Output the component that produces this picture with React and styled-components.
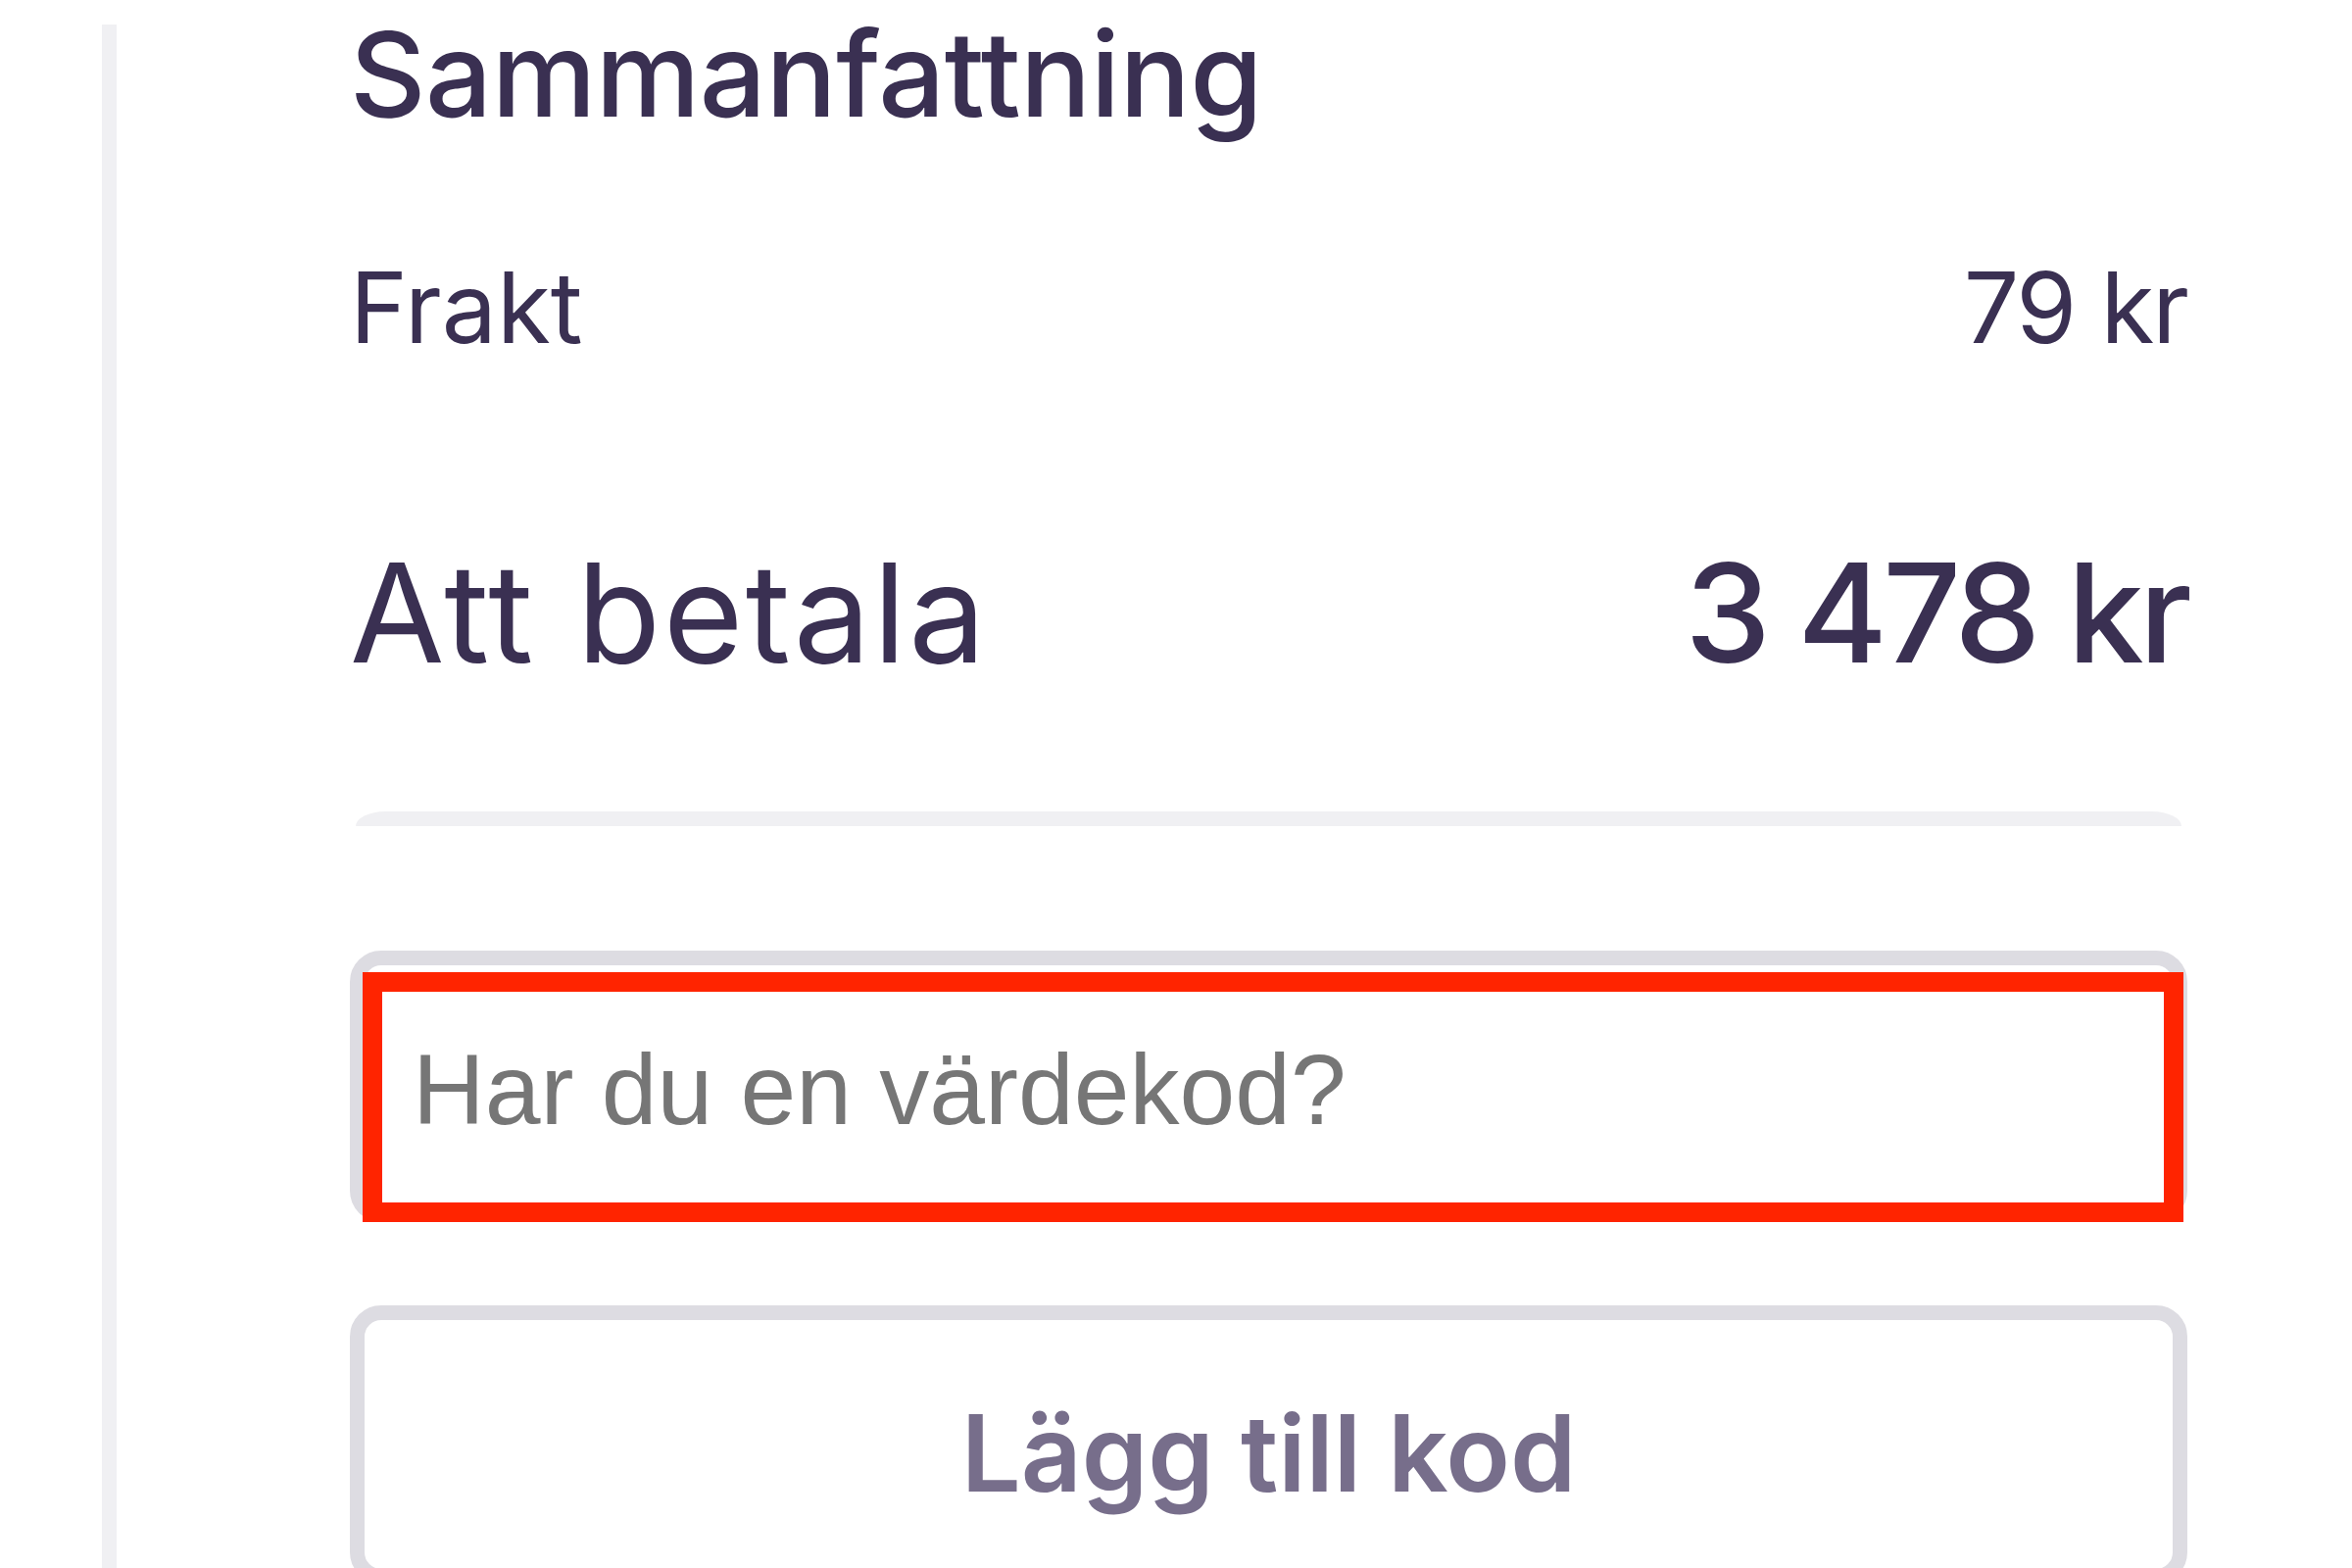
import React from "react";
import styled, { createGlobalStyle } from "styled-components";

const Global = createGlobalStyle`
  html, body { margin: 0; padding: 0; background: #ffffff; }
  * { box-sizing: border-box; }
  body { font-family: Inter, "Noto Sans", sans-serif; color: #3a3052; }
`;

const Page = styled.div`
  display: flex;
  align-items: stretch;
  min-height: 1600px;
  padding-left: 104px;
`;

const SideLine = styled.div`
  width: 15px;
  margin-top: 25px;
  background: #f0f0f3;
  flex: none;
`;

const Summary = styled.section`
  display: flex;
  flex-direction: column;
  width: 1875px;
  margin-left: 238px;
  padding-top: 16px;
  & > * {
    flex-shrink: 0;
  }
`;

const Title = styled.h2`
  margin: 0;
  font-size: 120px;
  line-height: 120px;
  font-weight: 500;
  color: #3a3052;
  letter-spacing: -0.5px;
`;

const Row = styled.div`
  display: flex;
  justify-content: space-between;
  align-items: baseline;
  margin-top: ${(p) => p.$gap}px;
  font-size: ${(p) => p.$size}px;
  line-height: ${(p) => p.$size}px;
  color: #3a3052;
`;

const Label = styled.span`
  font-weight: ${(p) => p.$weight || 400};
  letter-spacing: ${(p) => p.$spacing || 0}px;
`;

const Amount = styled.span`
  font-weight: ${(p) => p.$weight || 400};
  letter-spacing: ${(p) => p.$spacing || 0}px;
`;

const Divider = styled.div`
  height: 15px;
  margin: 133px 6px 0 6px;
  background: #f0f0f3;
  border-radius: 30px 30px 0 0 / 15px 15px 0 0;
`;

const CodeField = styled.div`
  margin-top: 127px;
  height: 277px;
  border: 15px solid #dddce2;
  border-radius: 32px;
`;

const CodeInput = styled.input`
  display: block;
  width: calc(100% - 27px);
  height: 215px;
  margin: 27px 0 0 18px;
  padding: 0 0 14px 31px;
  border: none;
  background: transparent;
  outline: 20px solid #ff2400;
  font-family: "Liberation Sans", Arial, sans-serif;
  font-size: 102px;
  color: #3a3052;
  &::placeholder {
    color: #767676;
    opacity: 1;
  }
`;

const AddButton = styled.button`
  display: flex;
  justify-content: center;
  align-items: flex-start;
  margin-top: 85px;
  width: 100%;
  height: 284px;
  padding: 82px 0 0 0;
  border: 15px solid #dddce2;
  border-radius: 32px;
  background: #ffffff;
  font-family: Inter, "Noto Sans", sans-serif;
  font-size: 108px;
  line-height: 108px;
  font-weight: 600;
  color: #776e8b;
  cursor: pointer;
`;

export default function App() {
  return (
    <>
      <Global />
      <Page>
        <SideLine />
        <Summary>
          <Title>Sammanfattning</Title>
          <Row $gap={128} $size={100}>
            <Label>Frakt</Label>
            <Amount $spacing={-2}>79 kr</Amount>
          </Row>
          <Row $gap={191} $size={140}>
            <Label $spacing={2.5}>Att betala</Label>
            <Amount $weight={500} $spacing={-5}>3 478 kr</Amount>
          </Row>
          <Divider />
          <CodeField>
            <CodeInput placeholder="Har du en värdekod?" />
          </CodeField>
          <AddButton>Lägg till kod</AddButton>
        </Summary>
      </Page>
    </>
  );
}
